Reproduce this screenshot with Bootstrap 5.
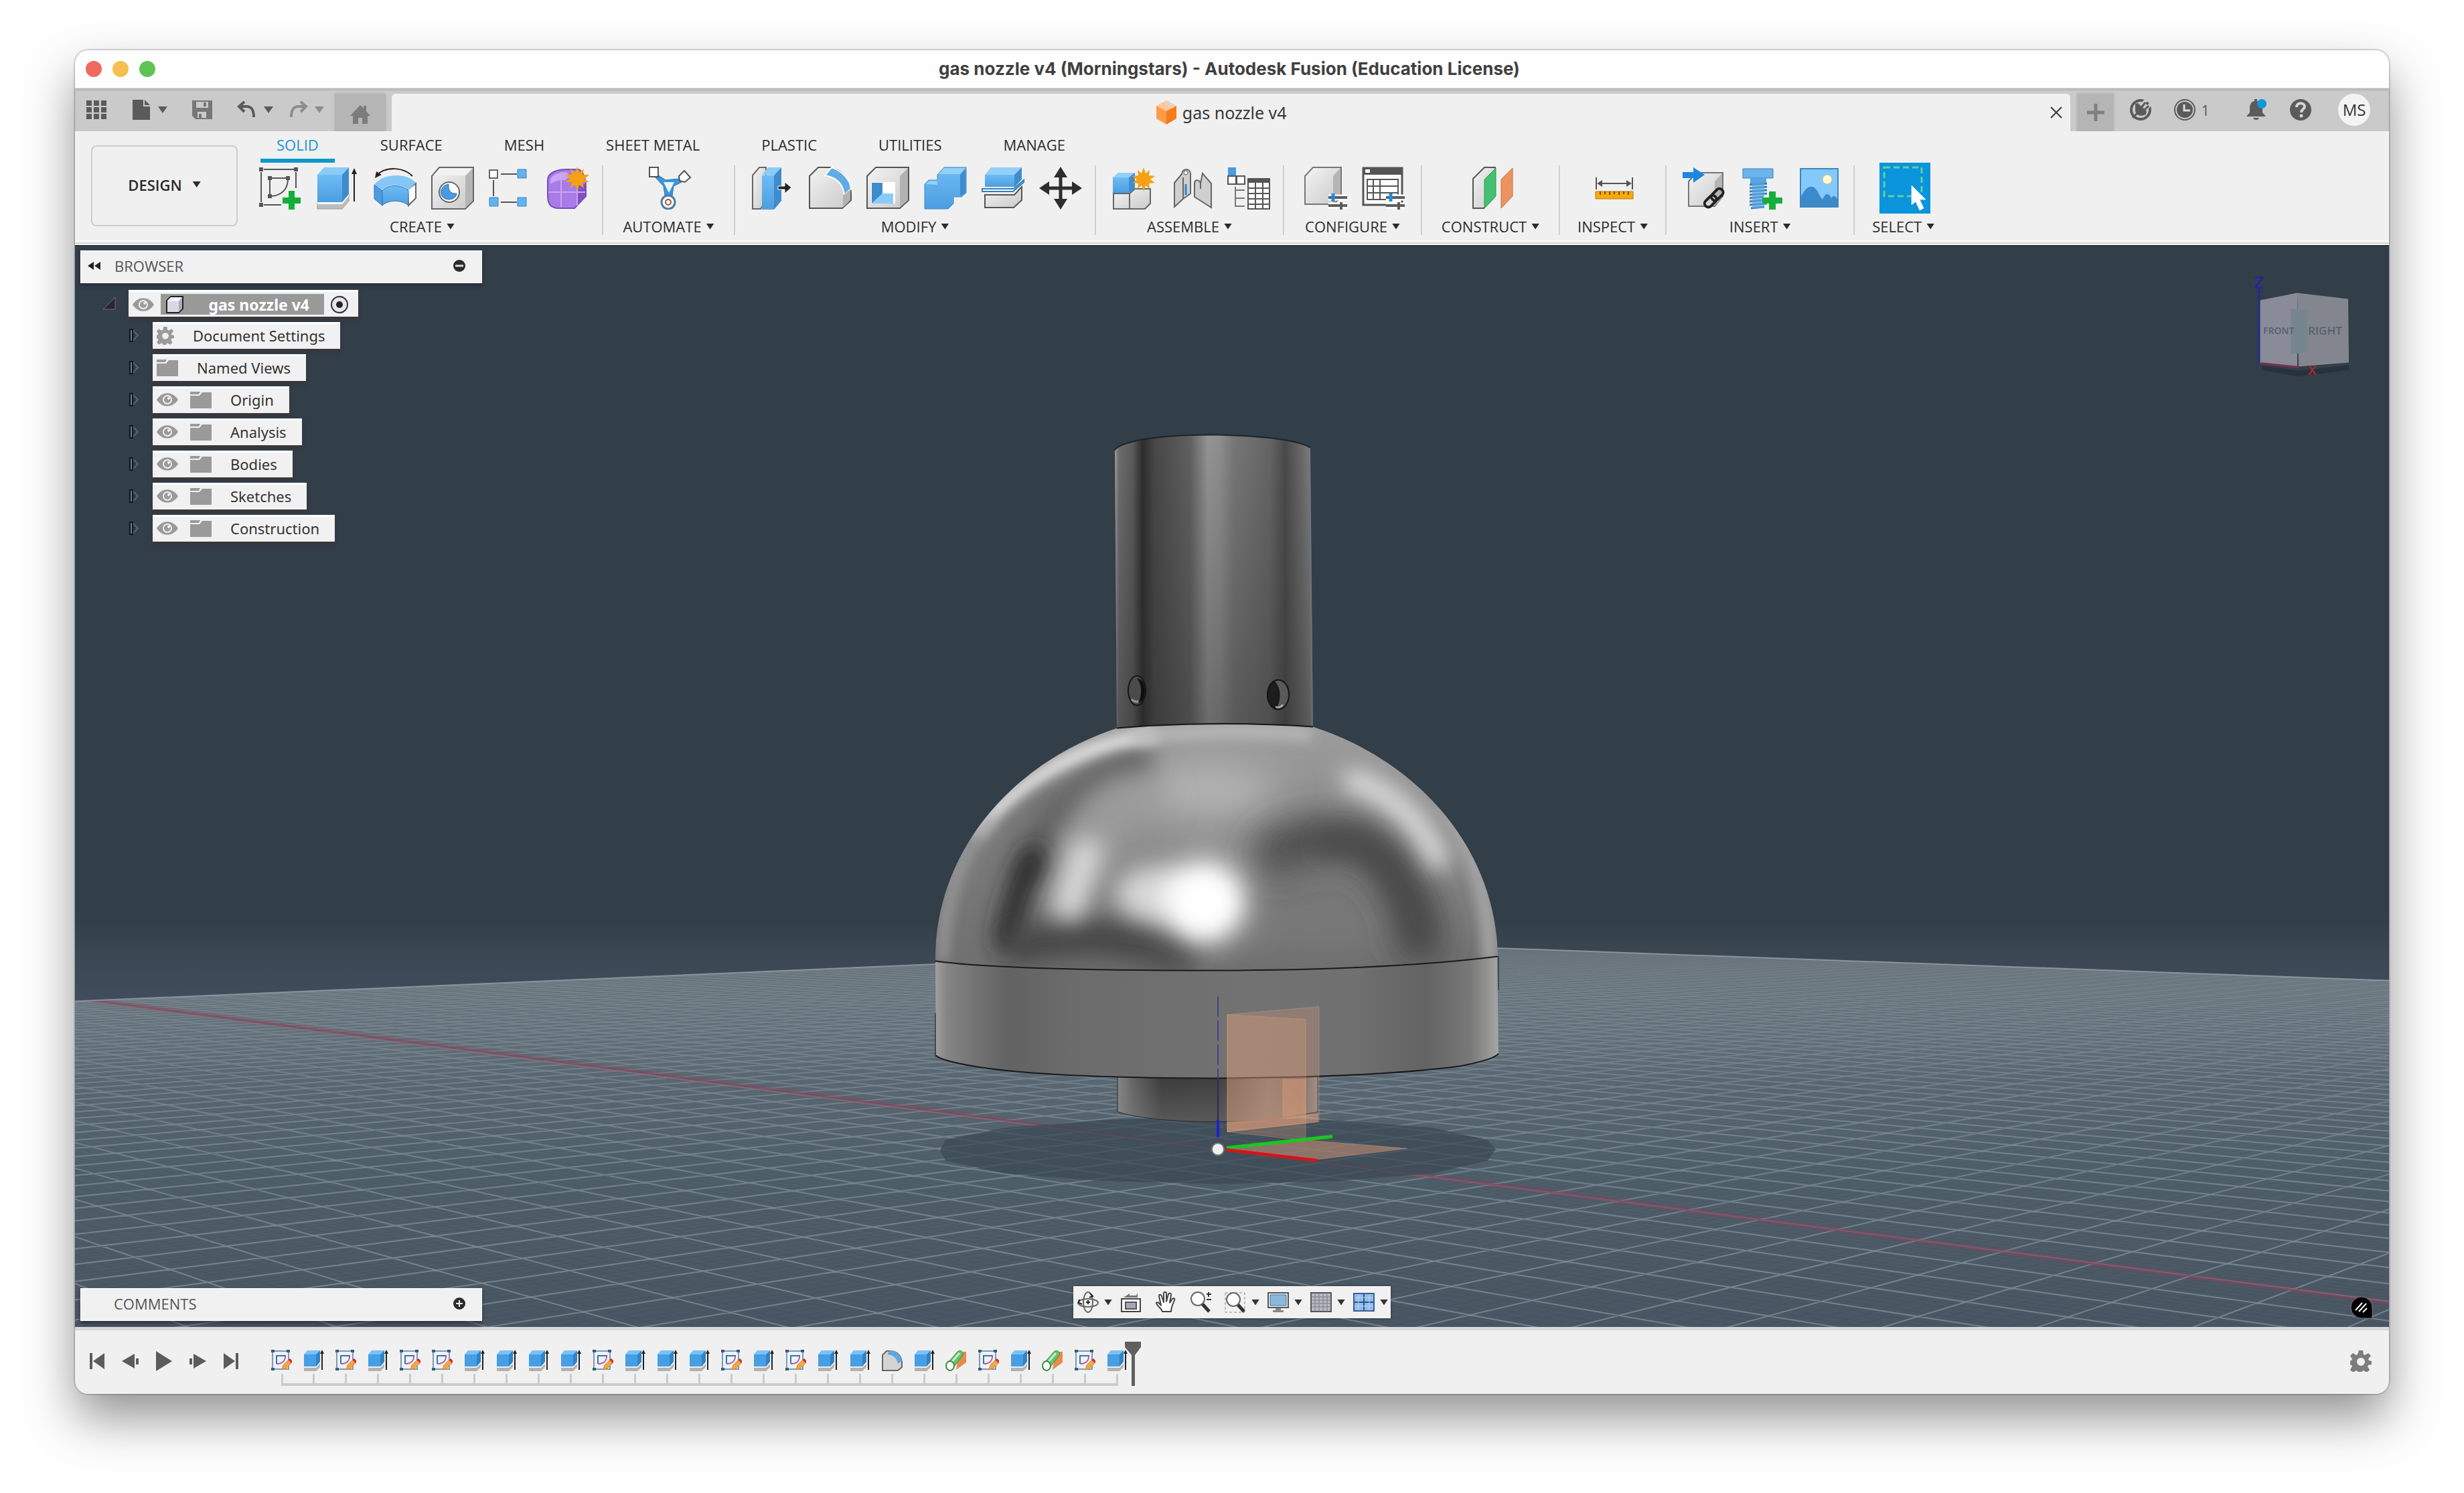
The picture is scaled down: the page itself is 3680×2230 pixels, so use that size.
<!DOCTYPE html>
<html lang="en">
<head>
<meta charset="utf-8">
<meta name="viewport" content="width=device-width, initial-scale=1">
<title>gas nozzle v4 (Morningstars) - Autodesk Fusion (Education License)</title>
<link href="https://cdn.jsdelivr.net/npm/bootstrap@5.3.0/dist/css/bootstrap.min.css" rel="stylesheet">
<style>
  body { background: #fefefe; font-family: "Open Sans", "Noto Sans", sans-serif; font-size: 22px; line-height: 28px; color: #2b2b2b; padding: 75px 112px 148px; }
  svg { display: block; flex: none; }
  button { color: inherit; font: inherit; background: none; border: 0; padding: 0; }
  .app-window { border-radius: 20px; background: #f0f0f0; box-shadow: 0 0 3px rgba(0,0,0,.6), 0 36px 72px rgba(0,0,0,.42); }
  .title-row { height: 57px; background: #fefefe; border-bottom: 1px solid #ddd; padding: 0 16px; font-family: Inter, sans-serif; font-weight: 700; font-size: 26px; color: #404040; }
  .dot { width: 24px; height: 24px; border-radius: 50%; }
  .dot-r { background: #ee6a5f; } .dot-y { background: #f5bf4f; } .dot-g { background: #5fc454; }
  .side-l { width: 120px; } .side-r { width: 128px; }
  .tab-strip { background: #cacaca; padding-top: 8px; color: #5b5b5b; box-shadow: inset 0 3px 3px #b9b9b9; }
  .tools-l { padding: 0 16px 8px; gap: 36px; }
  .g8 { gap: 8px; } .g22 { gap: 22px; }
  .i32 { width: 32px; height: 32px; } .i64 { width: 64px; height: 64px; }
  .tri { width: 14px; height: 10px; background: currentColor; clip-path: polygon(0 0, 100% 0, 50% 100%); flex: none; }
  .tri-s { width: 12px; height: 9px; }
  .faded { color: #8d8d8d; }
  .home-tab { width: 76px; padding-top: 6px; background: #b5b5b5; color: #7c7c7c; box-shadow: 0 0 3px #aaa; }
  .plus-tab { width: 55px; background: #b5b5b5; color: #7f7f7f; margin-left: 10px; box-shadow: 0 0 3px #aaa; }
  .doc-tab { background: #f0f0f0; height: 56px; margin-left: 9px; border-radius: 6px 6px 0 0; color: #383838; font-size: 25px; padding-right: 12px; }
  .doc-name { font-family: "Noto Sans", "Open Sans", sans-serif; }
  .tools-r { padding: 0 28px 8px 24px; }
  .me34 { margin-right: 34px; } .me54 { margin-right: 54px; } .me40 { margin-right: 40px; } .me32 { margin-right: 32px; }
  .avatar { width: 48px; height: 48px; border-radius: 50%; background: #f3f3f3; font-size: 24px; color: #333; }
  .ribbon { background: #f0f0f0; padding-left: 24px; }
  .design-btn { width: 219px; height: 121px; margin: 21px 7px 0 0; padding-bottom: 4px; border: 2px solid #cdcdcd; border-radius: 8px; font-weight: 600; }
  .rtabs { margin-left: 27px; gap: 44px; }
  .rtabs button { padding: 6px 24px 7px; border-bottom: 6px solid transparent; }
  .rtabs button.on { color: #1b93cf; border-color: #0c98c9; }
  .rgroups { margin-top: 4px; padding-bottom: 8px; }
  .rgroup { border-right: 2px solid #cfcfcf; height: 104px; padding-top: 2px; }
  .rgroup:last-child { border: 0; }
  .w-md { min-width: 197px; } .w-lg { min-width: 206px; }
  .ricons { gap: 22px; padding: 0 19px 0 24px; }
  .rlabel { padding: 0 26px; line-height: 26px; gap: 7px; }
  .pick { background: #0a94dc; width: 76px; height: 76px; margin: -6px 0; }
  .rule { height: 7px; background: linear-gradient(#fff 0 2px, #d2d2d2 2px 3px, #fff 3px 4px, #bbb 4px 5px, #fff 5px); }
  .viewport { background: #323e48; border-top: 1px solid #222; }
  .scene { position: absolute; inset: 0; width: 100%; height: 100%; }
  .overlay { position: relative; padding: 7px 8px 9px; }
  .pane { width: 600px; height: 49px; background: #f1f1f1; border: 1px solid #fff; color: #555; padding: 0 24px 4px 49px; box-shadow: 0 4px 5px rgba(40,34,50,.6); }
  .pane-b { padding-left: 10px; }
  .g20 { gap: 20px; }
  .tree { padding-top: 10px; gap: 8px; font-family: "Noto Sans", "Open Sans", sans-serif; }
  .trow { margin-left: 72px; gap: 20px; }
  .trow.root { margin-left: 32px; gap: 18px; }
  .tcell { height: 40px; background: #f1f1f1; border-top: 3px solid #fff; color: #333; padding: 0 23px 3px 6px; box-shadow: 0 5px 5px rgba(60,54,58,.8); }
  .tcell .ico { color: #9a9a9a; }
  .root .tcell { padding: 0 15px 0 6px; gap: 10px; }
  .root-name { background: #999; color: #fff; font-weight: 700; font-size: 23px; height: 31px; width: 244px; padding: 0 22px 0 6px; }
  .gap18 { gap: 18px; } .ps10 { padding-left: 10px; }
  .navbar-3d { background: #f1f1f1; height: 48px; padding: 0 4px 0 6px; gap: 12px; box-shadow: 0 0 3px rgba(0,0,0,.5); color: #333; margin-bottom: 4px; }
  .navbar-3d .solo { margin-right: 8px; }
  .navbar-3d button { gap: 8px; }
  .timeline { background: #f0f0f0; height: 100px; padding: 0 26px 4px 18px; border-top: 5px solid #d6d9dc; color: #5c5c5c; }
  .play { margin-right: 38px; width: 228px; padding-left: 2px; }
  .steps { padding-top: 29px; }
  .steps li { width: 48px; }
  .tickmark { height: 18px; border-bottom: 4px solid #cbcbcb; background: linear-gradient(#cbcbcb, #cbcbcb) center / 3px 100% no-repeat; margin-top: 4px; }
  .steps li:first-child .tickmark { margin-left: 24px; background-position: left; }
  .steps li:nth-last-child(2) .tickmark { margin-right: 22px; background-position: right; }
  .steps li.marker { width: 24px; margin: -12px 0 0 -12px; }
  .corner-badge { right: 24px; bottom: 12px; }
</style>
</head>
<body class="d-flex flex-column min-vh-100 m-0">

<svg width="0" height="0" class="position-absolute" aria-hidden="true">
  <defs>
    <linearGradient id="gGrey" x1="0" y1="0" x2="1" y2="1"><stop offset="0" stop-color="#f4f4f4"/><stop offset="1" stop-color="#c9c9c9"/></linearGradient>
    <linearGradient id="gBlue" x1="0" y1="0" x2="0" y2="1"><stop offset="0" stop-color="#6fbcf4"/><stop offset="1" stop-color="#4b9ee0"/></linearGradient>
    <!-- 32px glyphs -->
    <symbol id="apps" viewBox="0 0 32 32"><g fill="currentColor"><path d="M1 2h8v8H1zM12 2h8v8h-8zM23 2h8v8h-8zM1 12h8v8H1zM12 12h8v8h-8zM23 12h8v8h-8zM1 22h8v8H1zM12 22h8v8h-8zM23 22h8v8h-8z"/></g></symbol>
    <symbol id="file" viewBox="0 0 32 32"><path fill="currentColor" d="M2 1h16v10h10v20H2zM20 1l8 8h-8z"/></symbol>
    <symbol id="save" viewBox="0 0 32 32"><path fill="currentColor" fill-rule="evenodd" d="M1 2h30v28H6l-5-5zM7 4v9h18V4zM9 19v9h13v-9zM18 5h4v6h-4zM11 22h4v6h-4z" opacity=".75"/></symbol>
    <symbol id="undo" viewBox="0 0 32 32"><path fill="none" stroke="currentColor" stroke-width="4" d="M11 4 3 11l8 8M3 11h11c8 0 11 5 11 16"/></symbol>
    <symbol id="redo" viewBox="0 0 32 32"><path fill="none" stroke="currentColor" stroke-width="4" d="M19 4l8 7-8 8M27 11H16C8 11 5 16 5 27"/></symbol>
    <symbol id="home" viewBox="0 0 32 32"><path fill="currentColor" d="M16 2l5 5V3h4v8l6 7h-4v12h-8v-9h-6v9H5V18H1z"/></symbol>
    <symbol id="obox" viewBox="0 0 32 38"><path fill="#ffc79b" d="M16 1l15 8-15 8L1 9z"/><path fill="#ff9b48" d="M1 9l15 8v20L1 28z"/><path fill="#f87a17" d="M31 9l-15 8v20l15-9z"/><path fill="#d9d9d9" d="M16 1l15 8-7 4-10-7z" opacity=".6"/></symbol>
    <symbol id="cross" viewBox="0 0 18 18"><path stroke="currentColor" stroke-width="2" d="M1 1l16 16M17 1L1 17"/></symbol>
    <symbol id="plus" viewBox="0 0 26 26"><path stroke="currentColor" stroke-width="5" d="M13 0v26M0 13h26"/></symbol>
    <symbol id="ext" viewBox="0 0 32 32"><circle cx="16" cy="16" r="14" fill="none" stroke="currentColor" stroke-width="4"/><path stroke="#cacaca" stroke-width="5" d="M16 10L26 0M23 15l9-8"/><path fill="currentColor" d="M8 7l4-1 13 12-1 5-6 2c-6 0-10-3-10-9z"/><path stroke="currentColor" stroke-width="3" d="M17 13l6-8M21 17l7-7M4 28l8-8"/></symbol>
    <symbol id="clock" viewBox="0 0 32 32"><circle cx="16" cy="16" r="15" fill="none" stroke="currentColor" stroke-width="2"/><circle cx="16" cy="16" r="12" fill="currentColor"/><path fill="none" stroke="#ddd" stroke-width="3" d="M15 8v9h9"/></symbol>
    <symbol id="bell" viewBox="0 0 34 34"><path fill="currentColor" d="M13 1h4v3c6 1 8 5 8 11v6l5 6H1l5-6v-6C6 9 8 5 13 4zM11 29h9c-1 4-8 4-9 0z"/><circle cx="24" cy="8" r="7" fill="#0d97dc"/></symbol>
    <symbol id="help" viewBox="0 0 32 32"><circle cx="16" cy="16" r="16" fill="currentColor"/><path fill="none" stroke="#d6d6d6" stroke-width="4" d="M10 12c0-8 12-7 12-1 0 4-5 4-5 9"/><circle cx="17" cy="25" r="2.500" fill="#d6d6d6"/></symbol>
    <symbol id="rew" viewBox="0 0 20 12"><path fill="#222" d="M9 0v12L0 6zM19 0v12l-9-6z"/></symbol>
    <symbol id="minusc" viewBox="0 0 18 18"><circle cx="9" cy="9" r="9" fill="#2b2b2b"/><path stroke="#ddd" stroke-width="3" d="M3 9h12"/></symbol>
    <symbol id="plusc" viewBox="0 0 18 18"><circle cx="9" cy="9" r="9" fill="#2b2b2b"/><path stroke="#eee" stroke-width="2" d="M4 9h10M9 4v10"/></symbol>
    <symbol id="eye" viewBox="0 0 32 32"><path fill="currentColor" d="M0 16C8 3 24 3 32 16 24 29 8 29 0 16z"/><circle cx="16" cy="16" r="7" fill="#f1f1f1"/><circle cx="16" cy="16" r="5" fill="currentColor"/><circle cx="18" cy="14" r="2" fill="#f1f1f1"/></symbol>
    <symbol id="folder" viewBox="0 0 32 32"><path fill="currentColor" d="M0 4h15l-2 4H0zM0 10h14l4-5h14v24H0z"/></symbol>
    <symbol id="gear" viewBox="0 0 32 32"><path fill="currentColor" fill-rule="evenodd" d="M13 0h6l1 6 2 1 5-3 4 4-4 5 1 2 4 1v5l-5 1-1 2 3 5-4 4-5-3-2 1-1 5h-5l-1-5-2-1-5 3-4-4 3-5-1-2-5-1v-5l5-1 1-2-3-5 4-4 5 3 2-1zM16 11a6 6 0 100 12 6 6 0 000-12z"/></symbol>
    <symbol id="solid" viewBox="0 0 28 28"><path fill="#d9d9e3" stroke="#222" stroke-width="2" d="M2 8l6-6h18v18l-6 6H2z"/><path fill="#f4f4fb" d="M3 8l5-5h17l-5 6H3z"/><path fill="#a9a9b8" d="M20 9l5-6v17l-5 5z"/></symbol>
    <symbol id="ropen" viewBox="0 0 22 20"><path fill="#2a2633" stroke="#75688c" stroke-width="1" d="M20 1v18H2z"/></symbol>
    <symbol id="rshut" viewBox="0 0 16 20"><path fill="none" stroke="#566773" stroke-width="2" d="M5 1l9 9-9 9z"/><path fill="#6d7e8a" stroke="#11181c" stroke-width="2" d="M2 1v18h4V1z"/></symbol>
    <symbol id="radio" viewBox="0 0 26 26"><circle cx="13" cy="13" r="12" fill="#e4e4ec" stroke="#333" stroke-width="2"/><circle cx="13" cy="13" r="5" fill="#222"/></symbol>
    <!-- navigation glyphs -->
    <symbol id="orbit" viewBox="0 0 32 32"><g fill="none" stroke="#666" stroke-width="2"><ellipse cx="16" cy="17" rx="15" ry="6"/><ellipse cx="16" cy="16" rx="7" ry="15"/></g><path stroke="#222" stroke-width="2" fill="none" d="M16 13v6M13 16h6M19 3l4 4-5 2M3 12l-1 5 5 2"/></symbol>
    <symbol id="lookat" viewBox="0 0 32 32"><path fill="#fff" stroke="#444" stroke-width="2" d="M2 11h28v19H2z"/><path fill="#a6a8b8" stroke="#555" stroke-width="2" d="M8 16h16v10H8z"/><path fill="#777" d="M5 9l9-6v3h10l2-4v7z"/></symbol>
    <symbol id="hand" viewBox="0 0 32 32"><path fill="#fff" stroke="#444" stroke-width="2" stroke-linejoin="round" d="M11 30c-2-6-9-9-9-13 2-2 5 1 7 4L6 7c0-3 3-3 4 0l3 9V3c0-3 4-3 4 0v12l3-11c1-2 4-2 4 1l-2 12 4-6c2-2 4 0 3 2-2 6-5 9-5 17z"/></symbol>
    <symbol id="zoomg" viewBox="0 0 32 32"><circle cx="12" cy="11" r="10" fill="#fff" stroke="#666" stroke-width="2"/><path stroke="#333" stroke-width="5" d="M19 19l10 11"/><path stroke="#333" stroke-width="2" d="M28 1v7M25 4h7M25 12h7"/></symbol>
    <symbol id="zoomw" viewBox="0 0 32 32"><path fill="none" stroke="#888" stroke-width="1" stroke-dasharray="4 3" d="M1 2h29v29H1z"/><circle cx="13" cy="12" r="10" fill="#fff" stroke="#666" stroke-width="2"/><path stroke="#333" stroke-width="5" d="M20 20l9 10"/></symbol>
    <symbol id="screen" viewBox="0 0 32 32"><path fill="#eee" stroke="#555" stroke-width="2" d="M1 2h30v22H1z"/><path fill="#8ab9dd" stroke="#3e6f98" d="M4 5h24v16H4z"/><path fill="#888" d="M12 25h8v3h4v3H8v-3h4z"/></symbol>
    <symbol id="mesh" viewBox="0 0 32 32"><path fill="#b9b9c2" stroke="#555" stroke-width="2" d="M1 2h30v28H1z"/><path stroke="#7b7b86" d="M1 8h30M1 13h30M1 18h30M1 23h30M7 2v28M13 2v28M19 2v28M25 2v28"/></symbol>
    <symbol id="quad" viewBox="0 0 32 32"><path fill="#8fbbe9" stroke="#3c5f93" stroke-width="2" d="M1 3h30v26H1z"/><path stroke="#2f5590" stroke-width="2" d="M16 3v26M1 16h30"/><path stroke="#c0d9f3" d="M8 4v24M24 4v24M2 9h28M2 22h28"/></symbol>
    <!-- playback -->
    <symbol id="pfirst" viewBox="0 0 26 28"><path fill="currentColor" d="M2 2h4v24H2zM24 2v24L7 14z"/></symbol>
    <symbol id="pprev" viewBox="0 0 26 28"><path fill="currentColor" d="M19 3v22L0 14zM21 10h4v9h-4z"/></symbol>
    <symbol id="pplay" viewBox="0 0 26 32"><path fill="currentColor" d="M1 1l24 15L1 31z"/></symbol>
    <symbol id="pnext" viewBox="0 0 26 28"><path fill="currentColor" d="M7 3v22l19-11zM1 10h4v9H1z"/></symbol>
    <symbol id="plast" viewBox="0 0 26 28"><path fill="currentColor" d="M24 2h-4v24h4zM2 2v24l17-12z"/></symbol>
    <symbol id="pin" viewBox="0 0 24 66"><path fill="#5f5f5f" d="M0 0h24v8l-9 12v46h-5V20L0 8z"/></symbol>
    <!-- timeline features -->
    <symbol id="tS" viewBox="0 0 32 32"><path fill="#e9f4fd" stroke="#7f9ab4" stroke-width="2" d="M3 2h24v27H3z"/><path fill="#3c5b7a" d="M1 0h5v4H1zM24 0h5v4h-5zM1 27h5v4H1z"/><path fill="none" stroke="#4a6f93" stroke-width="2" d="M9 21V9h14"/><path fill="none" stroke="#c2569d" stroke-width="2" d="M22 10c0 7-5 11-13 11"/><path fill="#f3a83d" stroke="#d9822b" d="M17 30l2-7 8-8 5 4-9 9z"/><path fill="#cf3040" d="M26 15l3-2 4 4-2 3z"/></symbol>
    <symbol id="tE" viewBox="0 0 32 32"><path fill="#b2b2b2" d="M2 25h18l6-5v6l-6 6H2z"/><path fill="#eee" d="M2 24h18l6-6v3l-6 6H2z"/><path fill="#469fe4" d="M2 7h18v18H2z"/><path fill="#7cc1f5" d="M2 7l5-6h19l-6 6z"/><path fill="#2f83c8" d="M20 7l6-6v17l-6 7z"/><path stroke="#222" stroke-width="2" d="M29 30V4"/><path fill="#222" d="M26 6l3-6 3 6z"/></symbol>
    <symbol id="tF" viewBox="0 0 32 32"><path fill="#d4d4d4" stroke="#666" stroke-width="2" d="M2 31V8l6-6h6c11 1 16 8 17 17v7l-6 5z"/><path fill="#5da9df" d="M13 1c11 1 17 8 18 16l-6 4C24 14 19 8 9 7z"/></symbol>
    <symbol id="tP" viewBox="0 0 32 32"><path fill="#e98a4a" d="M20 3h11v16L16 30z"/><path fill="#67c26f" stroke="#3a8a42" d="M3 20L19 2c4-2 9 2 7 6L11 28z"/><path stroke="#c8efcb" stroke-width="3" d="M8 20L21 5"/><ellipse cx="7" cy="24" rx="6" ry="7" fill="#fff" stroke="#3a8a42" stroke-width="2"/></symbol>
    <!-- ribbon, 64px -->
    <symbol id="rSketch" viewBox="0 0 64 64"><g fill="none" stroke="#555" stroke-width="2"><path d="M8 4h45M4 8v45M56 8v24M8 57h26M20 17h22M17 20v22M44 20c-1 14-8 22-24 24"/></g><path fill="#555" d="M1 1h6v6H1zM53 1h6v6h-6zM1 54h6v6H1zM14 14h6v6h-6zM41 14h6v6h-6zM14 41h6v6h-6z"/><path fill="#12ae38" d="M45 36h9v10h9v9h-9v9h-9v-9h-9v-9h9z"/></symbol>
    <symbol id="rExt" viewBox="0 0 64 64"><path fill="#bdbdbd" stroke="#999" d="M2 53h37l10-12v10L39 63H2z"/><path fill="#fff" d="M2 52h37l10-12v4L39 56H2z"/><path fill="url(#gBlue)" d="M2 12h37v41H2z"/><path fill="#8accf8" d="M2 12L12 1h37L39 12z"/><path fill="#3f8ccd" d="M39 12L49 1v40L39 53z"/><path stroke="#222" stroke-width="2" d="M57 52V8"/><path fill="#222" d="M53 11l4-9 4 9z"/></symbol>
    <symbol id="rRev" viewBox="0 0 64 64"><path fill="#fff" stroke="#666" stroke-width="2" d="M51 34l12-9v22L52 58z"/><path fill="#84c7f7" d="M1 27C14 9 50 9 63 24L52 35C42 25 22 25 13 35z"/><path fill="#4a9be0" stroke="#3378b8" d="M1 27l12 9v22L1 48z"/><path fill="url(#gBlue)" stroke="#3378b8" d="M13 36c9-10 29-10 39 0v22c-10-9-30-9-39 0z"/><path fill="none" stroke="#331f1f" stroke-width="2" d="M6 11c14-11 38-11 52 3"/><path fill="#331f1f" d="M2 17l2-10 8 5z"/></symbol>
    <symbol id="rHole" viewBox="0 0 64 64"><path fill="url(#gGrey)" stroke="#666" stroke-width="2" d="M1 14L12 1h51v50L51 63H1z"/><path fill="#f2f2f2" d="M3 13L13 3h47l-9 10z"/><path fill="#b5b5b5" d="M51 14l11-11v47L51 62z"/><circle cx="27" cy="38" r="15" fill="#fff" stroke="#666" stroke-width="2"/><path fill="#4a9be0" stroke="#2d74b3" d="M26 26c-16 3-15 22 0 23 7 0 12-4 12-9-9 1-13-5-12-14z"/></symbol>
    <symbol id="rPat" viewBox="0 0 64 64"><path stroke="#555" stroke-width="2" d="M18 11h24M7 20v24M18 53h24"/><path fill="#fff" stroke="#666" stroke-width="2" d="M1 5h12v12H1z"/><path fill="#62b2ee" stroke="#3f86bf" d="M43 4h13v13H43zM1 46h13v13H1zM43 46h13v13H43z"/></symbol>
    <symbol id="rForm" viewBox="0 0 64 64"><path fill="#a97be6" stroke="#7a4dc0" stroke-width="2" d="M2 20C2 10 14 4 30 4h18c8 4 11 12 11 26v14L42 62H18C6 62 2 55 2 44z"/><path fill="#c9a5f5" d="M6 20C8 12 18 8 30 8l6 6-8 6c-10 0-16 2-22 6z"/><path fill="#7f52c4" d="M48 26h10v18L46 56z"/><path fill="none" stroke="#c9a5f5" stroke-width="2" d="M22 8v53M3 38h55M46 24v34"/><path fill="#f5a114" d="M46 0l3 9 7-6-2 9 10 0-7 6 7 5-10 0 2 9-7-5-3 9-3-9-7 5 2-9-10 0 7-5-7-6 10 0-2-9 7 6z"/></symbol>
    <symbol id="rAuto" viewBox="0 0 64 64"><path fill="#3c97dc" stroke="#2a6ea8" d="M10 10l15 10 20-2 4 5-12 6-3 20h-9l-3-20L6 12z"/><path fill="#e8f4fd" d="M22 23h16l-8 16z"/><path fill="#fff" stroke="#555" stroke-width="2" d="M1 1h13v14H1zM45 14l8-8 9 10-8 7-8-2z"/><circle cx="29" cy="53" r="10" fill="#fff" stroke="#4a7da8" stroke-width="3"/><circle cx="29" cy="53" r="4" fill="#fff" stroke="#a0503c" stroke-width="2"/></symbol>
    <symbol id="rPress" viewBox="0 0 64 64"><path fill="url(#gGrey)" stroke="#666" stroke-width="2" d="M2 13L12 1h10v50L14 63H2z"/><path fill="url(#gBlue)" d="M16 13h18v51H16z"/><path fill="#8accf8" d="M16 12L25 1h20L34 13z"/><path fill="#3f8ccd" d="M34 13L45 1v50L34 64z"/><path fill="#222" stroke="#fff" d="M40 29h10v-6l10 8-10 9v-6H40z"/></symbol>
    <symbol id="rFillet" viewBox="0 0 64 64"><path fill="url(#gGrey)" stroke="#555" stroke-width="2" d="M1 62V14L14 1h18c20 4 30 20 31 39v10L50 62z"/><path fill="#62ace3" stroke="#fff" stroke-width="2" d="M34 1c18 6 28 20 29 32l-10 9C51 26 42 16 24 13z"/><path fill="#b2b2b2" d="M51 43l11-9v16L51 61z"/></symbol>
    <symbol id="rShell" viewBox="0 0 64 64"><path fill="url(#gGrey)" stroke="#555" stroke-width="2" d="M1 14L14 1h49v49L50 62H1z"/><path fill="#b2b2b2" d="M50 14L62 2v48L50 61z"/><path fill="#fff" d="M7 23h36v32H7z"/><path fill="#3e8cc9" d="M8 24h16v16L8 55z"/><path fill="#8accf8" d="M8 55l16-15h16v15z"/></symbol>
    <symbol id="rComb" viewBox="0 0 64 64"><path fill="url(#gBlue)" stroke="#4288bf" d="M1 26l6-6h13V12L30 1h33v38l-7 6H44v10l-8 8H1z"/><path fill="#93d0f9" d="M22 11l8-9h32l-8 9zM2 26l6-5h12v6z"/><path fill="#3f8ccd" d="M54 12l8-9v36l-8 5z"/></symbol>
    <symbol id="rSplit" viewBox="0 0 64 64"><path fill="url(#gGrey)" stroke="#555" stroke-width="2" d="M5 42h44l11-12v20L48 61H5z"/><path fill="url(#gBlue)" d="M5 12h44v18H5z"/><path fill="#93d0f9" d="M5 12L14 1h46L49 12z"/><path fill="#3f8ccd" d="M49 12L60 1v18L49 31z"/><path fill="#fff" stroke="#2f7fc2" stroke-width="2" d="M1 37h46l16-14v-3L48 33H1z"/></symbol>
    <symbol id="rMove" viewBox="0 0 64 64"><path stroke="#2e2e2e" stroke-width="5" d="M32 8v48M8 32h48"/><path fill="#2e2e2e" d="M32 0l10 16H22zM32 64l10-16H22zM0 32l15-10v20zM64 32L49 22v20z"/></symbol>
    <symbol id="rNewC" viewBox="0 0 64 64"><path fill="url(#gGrey)" stroke="#666" stroke-width="2" d="M2 40h24v23H2zM26 40l8-7h23v22l-8 8H26z"/><path fill="url(#gBlue)" d="M1 16h24v23H1z"/><path fill="#93d0f9" d="M1 16l8-7h25l-9 7z"/><path fill="#3f8ccd" d="M25 16l9-7v24l-9 6z"/><path fill="#f5a114" d="M47 1l3 9 6-5-1 8 9 1-7 5 7 5-9 1 1 8-6-5-3 9-3-9-6 5 1-8-9-1 7-5-7-5 9-1-1-8 6 5z"/></symbol>
    <symbol id="rJoint" viewBox="0 0 64 64"><path fill="#cfcfcf" stroke="#666" stroke-width="2" d="M7 24l11-13c1-9 12-9 13-1v30L20 48 7 60zM37 24c1-5 8-5 9 1l3-15 13 15v36L37 45z"/><circle cx="24" cy="9" r="3" fill="#fff" stroke="#555"/><path stroke="#2f86cd" stroke-width="3" d="M24 26v16"/><path stroke="#666" stroke-width="2" d="M20 16v32M46 25v8"/></symbol>
    <symbol id="rBom" viewBox="0 0 64 64"><path fill="#4a9be0" d="M1 1h12v12H1z"/><path fill="#fff" stroke="#555" stroke-width="2" d="M1 14h12v12H1zM14 14h12v12H14z"/><path stroke="#777" stroke-width="2" d="M12 30v30M12 35h14M12 47h14M12 59h14"/><path fill="#fff" stroke="#555" stroke-width="2" d="M31 18h32v45H31z"/><path fill="#555" d="M30 17h34v7H30z"/><path stroke="#555" stroke-width="2" d="M31 32h32M31 40h32M31 48h32M31 56h32M42 24v39M53 24v39"/></symbol>
    <symbol id="sliders" viewBox="0 0 28 30"><path stroke="#fff" stroke-width="9" d="M0 10h28M0 22h28"/><path stroke="#5c5c5c" stroke-width="4" d="M0 10h28M0 22h28"/><path stroke="#1b8be8" stroke-width="5" d="M7 4v12"/><path stroke="#5c5c5c" stroke-width="4" d="M19 17v11"/></symbol>
    <symbol id="rConf" viewBox="0 0 64 64"><path fill="url(#gGrey)" stroke="#777" stroke-width="2" d="M1 14L13 1h42v44L44 56H1z"/><path fill="#b5b5b5" d="M43 14L54 2v42L43 55z"/><use href="#sliders" x="36" y="36" width="28" height="30"/></symbol>
    <symbol id="rTab" viewBox="0 0 64 64"><path fill="#fff" stroke="#555" stroke-width="3" d="M2 2h58v55H2z"/><path fill="#555" d="M1 1h60v11H1z"/><path fill="#fff" d="M5 4h7v5H5z"/><path fill="none" stroke="#555" stroke-width="2" d="M8 19h46v30H8zM8 29h46M8 39h46M17 19v30M27 19v30"/><use href="#sliders" x="36" y="36" width="28" height="30"/></symbol>
    <symbol id="rPlane" viewBox="0 0 64 64"><path fill="url(#gGrey)" stroke="#555" stroke-width="2" d="M3 18L20 1h16v43L19 62H3z"/><path fill="#45c070" stroke="#2c9a52" d="M20 19L37 2v42L20 62z"/><path fill="#ec9460" stroke="#c9713c" d="M45 19L62 2v42L45 62z"/></symbol>
    <symbol id="rMeas" viewBox="0 0 64 64"><path stroke="#555" stroke-width="2" d="M5 16v18M59 16v18M8 25h48"/><path fill="#555" d="M6 25l8-5v10zM58 25l-8-5v10z"/><path fill="#f8a90c" stroke="#b97a06" stroke-width="1" d="M4 37h56v11H4z"/><path stroke="#6b4a0a" stroke-width="2" d="M11 37v5M18 37v4M25 37v5M32 37v4M39 37v5M46 37v4M53 37v5"/></symbol>
    <symbol id="rLink" viewBox="0 0 64 64"><path fill="url(#gGrey)" stroke="#777" stroke-width="2" d="M9 22L20 9h40v35L48 59H9z"/><path fill="#b5b5b5" d="M48 22l11-12v36L48 58z"/><path fill="#1d86df" d="M0 8h16V1l17 11-17 12v-7H0z"/><g fill="none" stroke="#222" stroke-width="4"><rect x="32" y="46" width="20" height="11" rx="5" transform="rotate(-45 42 52)"/><rect x="42" y="36" width="20" height="11" rx="5" transform="rotate(-45 52 42)"/></g></symbol>
    <symbol id="rBolt" viewBox="0 0 64 64"><path fill="#6bb4ee" stroke="#3a80bb" d="M4 3h45v14H4z"/><path fill="#5aa5e2" d="M15 17h24v10H15z"/><path stroke="#3a80bb" stroke-width="3" d="M14 27l26-2M14 32l26-2M14 37l26-2M14 42l26-2M14 47l20-2M14 52l20-2M14 57l26-2M16 62l20-2"/><path fill="#5aa5e2" d="M18 22h18v40H18z" opacity=".7"/><path fill="#14b03a" d="M43 37h10v9h10v9H53v9H43v-9H33v-9h10z"/></symbol>
    <symbol id="rImg" viewBox="0 0 64 64"><path fill="#84c9fb" stroke="#3f86bf" stroke-width="2" d="M4 3h56v57H4z"/><path fill="#3b8bca" d="M5 45c8-18 20-22 28-1l4 5c4-10 9-11 13-2 3-5 6-4 9 1v11H5z"/><circle cx="44" cy="19" r="7" fill="#fffbd8" stroke="#ddb96a"/></symbol>
    <symbol id="rSel" viewBox="0 0 76 76"><path fill="none" stroke="#5fd0a0" stroke-width="3" stroke-dasharray="9 5" d="M7 7h56v43H7z"/><path fill="#fff" stroke="#cfe9f8" d="M48 34v29l6-5 6 13 6-3-6-13h9z"/></symbol>
  </defs>
</svg>

<main class="app-window d-flex flex-column flex-fill overflow-hidden">

  <header class="title-row d-flex align-items-center justify-content-between">
    <div class="side-l d-flex gap-3">
      <button class="dot dot-r" aria-label="Close window"></button><button class="dot dot-y" aria-label="Minimise"></button><button class="dot dot-g" aria-label="Zoom window"></button>
    </div>
    <div>gas nozzle v4 (Morningstars) - Autodesk Fusion (Education License)</div>
    <div class="side-r"></div>
  </header>

  <nav class="tab-strip d-flex">
    <div class="tools-l d-flex align-items-center">
      <button aria-label="Data panel"><svg class="i32"><use href="#apps"/></svg></button>
      <button class="d-flex align-items-center g8" aria-label="File"><svg class="i32"><use href="#file"/></svg><span class="tri"></span></button>
      <button aria-label="Save"><svg class="i32"><use href="#save"/></svg></button>
      <div class="d-flex align-items-center g22">
        <button class="d-flex align-items-center g8" aria-label="Undo"><svg class="i32"><use href="#undo"/></svg><span class="tri"></span></button>
        <button class="d-flex align-items-center g8 faded" aria-label="Redo"><svg class="i32"><use href="#redo"/></svg><span class="tri"></span></button>
      </div>
    </div>
    <button class="home-tab d-flex align-items-center justify-content-center" aria-label="Home"><svg class="i32"><use href="#home"/></svg></button>
    <div class="doc-tab d-flex align-items-center flex-fill">
      <div class="d-flex align-items-center justify-content-center flex-fill g8"><svg width="32" height="38"><use href="#obox"/></svg><span class="doc-name">gas nozzle v4</span></div>
      <button aria-label="Close tab"><svg width="18" height="18"><use href="#cross"/></svg></button>
    </div>
    <button class="plus-tab d-flex align-items-center justify-content-center" aria-label="New tab"><svg width="26" height="26"><use href="#plus"/></svg></button>
    <div class="tools-r d-flex align-items-center">
      <button class="me34" aria-label="Extensions"><svg class="i32"><use href="#ext"/></svg></button>
      <button class="d-flex align-items-center g8 me54" aria-label="Job status"><svg class="i32"><use href="#clock"/></svg><span>1</span></button>
      <button class="me32" aria-label="Notifications"><svg width="34" height="34"><use href="#bell"/></svg></button>
      <button class="me40" aria-label="Help"><svg class="i32"><use href="#help"/></svg></button>
      <button class="avatar">MS</button>
    </div>
  </nav>

  <section class="ribbon d-flex">
    <button class="design-btn d-flex align-items-center justify-content-center gap-3"><span>DESIGN</span><span class="tri tri-s"></span></button>
    <div>
      <div class="rtabs d-flex">
        <button class="on">SOLID</button><button>SURFACE</button><button>MESH</button><button>SHEET METAL</button><button>PLASTIC</button><button>UTILITIES</button><button>MANAGE</button>
      </div>
      <div class="rgroups d-flex" id="groups"></div>
    </div>
  </section>
  <div class="rule"></div>

  <section class="viewport position-relative d-flex flex-column flex-fill">
    <svg class="scene" viewBox="112 366 3456 1616" preserveAspectRatio="xMidYMid slice" aria-label="3D view of the gas nozzle">
      <defs>
        <linearGradient id="sky" gradientUnits="userSpaceOnUse" x1="0" y1="1370" x2="0" y2="1495"><stop offset="0" stop-color="#323e48"/><stop offset=".4" stop-color="#3a4650"/><stop offset="1" stop-color="#414d5e"/></linearGradient>
        <linearGradient id="floor" gradientUnits="userSpaceOnUse" x1="0" y1="1410" x2="0" y2="1982"><stop offset="0" stop-color="#8f939b"/><stop offset=".12" stop-color="#7f8a92"/><stop offset=".35" stop-color="#5f6e78"/><stop offset=".6" stop-color="#50606b"/><stop offset="1" stop-color="#495663"/></linearGradient>
        <linearGradient id="lineFade" gradientUnits="userSpaceOnUse" x1="0" y1="1480" x2="0" y2="1900"><stop offset="0" stop-color="#a3b2ba" stop-opacity=".12"/><stop offset=".5" stop-color="#a3b2ba" stop-opacity=".36"/><stop offset="1" stop-color="#9aa9b1" stop-opacity=".52"/></linearGradient>
        <linearGradient id="tube"><stop offset="0" stop-color="#a2a09e"/><stop offset=".02" stop-color="#6e6e6e"/><stop offset=".09" stop-color="#5a5a5a"/><stop offset=".14" stop-color="#2c2c2c"/><stop offset=".2" stop-color="#474747"/><stop offset=".38" stop-color="#606060"/><stop offset=".47" stop-color="#949494"/><stop offset=".53" stop-color="#8e8e8e"/><stop offset=".6" stop-color="#777"/><stop offset=".78" stop-color="#656565"/><stop offset=".86" stop-color="#4a4a4a"/><stop offset=".95" stop-color="#6c6c6c"/><stop offset=".985" stop-color="#7b7b7b"/><stop offset="1" stop-color="#8fa0a8"/></linearGradient>
        <linearGradient id="tubeDark" x1="0" y1="0" x2="0" y2="1"><stop offset="0" stop-color="#2a2a2a" stop-opacity="0"/><stop offset="1" stop-color="#2a2a2a" stop-opacity=".4"/></linearGradient>
        <linearGradient id="band"><stop offset="0" stop-color="#a2a09e"/><stop offset=".02" stop-color="#858585"/><stop offset=".07" stop-color="#737373"/><stop offset=".13" stop-color="#626262"/><stop offset=".25" stop-color="#6c6c6c"/><stop offset=".55" stop-color="#727272"/><stop offset=".75" stop-color="#707070"/><stop offset=".87" stop-color="#636363"/><stop offset=".95" stop-color="#787878"/><stop offset="1" stop-color="#a5a5a3"/></linearGradient>
        <linearGradient id="stem"><stop offset="0" stop-color="#858585"/><stop offset=".08" stop-color="#626262"/><stop offset=".22" stop-color="#383838"/><stop offset=".5" stop-color="#3b3b3b"/><stop offset=".75" stop-color="#6a6a6a"/><stop offset=".92" stop-color="#5c5c5c"/><stop offset="1" stop-color="#8b8b8b"/></linearGradient>
        <linearGradient id="stemLight" x1="0" y1="0" x2="0" y2="1"><stop offset="0" stop-color="#888" stop-opacity="0"/><stop offset="1" stop-color="#888" stop-opacity=".4"/></linearGradient>
        <linearGradient id="domeBase" x1="0" y1="0" x2="0" y2="1"><stop offset="0" stop-color="#9c9c9c"/><stop offset=".5" stop-color="#8c8c8c"/><stop offset="1" stop-color="#6e6e6e"/></linearGradient>
        <filter id="b8" filterUnits="userSpaceOnUse" x="1300" y="1000" width="1040" height="520"><feGaussianBlur stdDeviation="9"/></filter>
        <filter id="b14" filterUnits="userSpaceOnUse" x="1300" y="1000" width="1040" height="520"><feGaussianBlur stdDeviation="17"/></filter>
        <filter id="b24" filterUnits="userSpaceOnUse" x="1300" y="1000" width="1040" height="520"><feGaussianBlur stdDeviation="28"/></filter>
        <clipPath id="floorClip"><path d="M112 1495L2085 1410L3568 1464V1982H112z"/></clipPath>
        <clipPath id="domeClip"><path id="domeShape" d="M1397 1435V1430A421 367 0 0 1 1668 1087Q1818 1075 1961 1085A419 370 0 0 1 2237 1428Q2080 1450 1818 1450Q1500 1449 1397 1435z"/></clipPath>
      </defs>
      <rect x="112" y="366" width="3456" height="1616" fill="#323e48"/>
      <rect x="112" y="1370" width="3456" height="300" fill="url(#sky)"/>
      <g clip-path="url(#floorClip)">
        <rect x="112" y="1400" width="3456" height="582" fill="url(#floor)"/>
        <path id="minor" fill="none" stroke="#2c3a45" stroke-opacity=".13" stroke-width="1"/>
        <path id="major" fill="none" stroke="url(#lineFade)" stroke-width="2"/>
        <path d="M112 1490L3568 1945" stroke="#8c4058" stroke-opacity=".2" stroke-width="10"/>
        <path d="M112 1490L3568 1945" stroke="#8c4058" stroke-opacity=".55" stroke-width="3"/>
      </g>
      <path d="M112 1495L2085 1410L3568 1464" fill="none" stroke="#a0a8b0" stroke-opacity=".7" stroke-width="2"/>
      <path d="M1404 1718L1412 1702L1500 1684L1650 1672L1820 1667L2000 1673L2140 1684L2222 1702L2234 1716L2222 1733L2140 1752L1990 1764L1819 1768L1640 1763L1500 1752L1412 1733z" fill="#3a4854" fill-opacity=".72"/>

      <path d="M1669 1590H1968V1660Q1900 1675 1806 1675Q1710 1674 1669 1660z" fill="url(#stem)"/>
      <path d="M1669 1600H1968V1660Q1900 1675 1806 1675Q1710 1674 1669 1660z" fill="url(#stemLight)" stroke="#2a2a2a" stroke-width="1"/>

      <path d="M1665 672Q1668 664 1705 656Q1760 648 1820 649Q1930 652 1957 668L1961 1100H1668z" fill="url(#tube)"/>
      <path d="M1665 672Q1668 664 1705 656Q1760 648 1820 649Q1930 652 1957 668L1961 1100H1668z" fill="url(#tubeDark)"/>
      <path d="M1665 672Q1668 664 1705 656Q1760 648 1820 649Q1930 652 1957 668" fill="none" stroke="#1d2429" stroke-width="2"/>
      <g stroke="#161616" stroke-width="2">
        <ellipse cx="1698" cy="1031" rx="13" ry="22" fill="#4b4b4b"/><path d="M1700 1014q9 14 2 34q8-3 8-18q-1-14-10-16z" fill="#0c0c0c"/><path d="M1690 1044q5 5 10 3" stroke="#999" stroke-width="3" fill="none"/>
        <ellipse cx="1909" cy="1037" rx="16" ry="22" fill="#595959"/><path d="M1903 1017q14 18 2 41q-12-6-12-20q1-15 10-21z" fill="#1d1d1d"/><path d="M1905 1055q6 3 11-3" stroke="#bbb" stroke-width="2" fill="none"/>
      </g>

      <g clip-path="url(#domeClip)">
        <use href="#domeShape" fill="url(#domeBase)"/>
        <g fill="none" stroke-linecap="round">
          <ellipse cx="1806" cy="1180" rx="100" ry="40" fill="#b4b4b4" filter="url(#b24)"/>
          <path d="M1450 1440C1440 1330 1480 1240 1560 1180" stroke="#707070" stroke-width="50" filter="url(#b24)"/>
          <path d="M1700 1135C1610 1155 1560 1220 1530 1300" stroke="#606060" stroke-width="46" filter="url(#b14)"/>
          <path d="M1545 1280C1522 1320 1512 1360 1504 1405" stroke="#222" stroke-width="36" filter="url(#b14)"/>
          <path d="M1530 1412C1620 1392 1690 1400 1760 1425" stroke="#464646" stroke-width="56" filter="url(#b14)"/>
          <path d="M1640 1260C1640 1220 1660 1200 1700 1190" stroke="#9e9e9e" stroke-width="60" filter="url(#b24)"/>
          <ellipse cx="1960" cy="1350" rx="110" ry="50" fill="#777" filter="url(#b24)"/>
          <path d="M1900 1275C1960 1240 2030 1240 2072 1285C2108 1330 2120 1370 2122 1410" stroke="#404040" stroke-width="58" filter="url(#b24)"/>
          <path d="M1980 1262C2020 1250 2045 1260 2070 1292C2098 1330 2112 1370 2118 1400" stroke="#484848" stroke-width="30" filter="url(#b14)"/>
          <path d="M1460 1240C1530 1155 1630 1108 1720 1098" stroke="#e4e4e4" stroke-width="20" filter="url(#b8)"/>
          <path d="M1700 1100C1800 1090 1880 1090 1950 1096" stroke="#b8b8b8" stroke-width="20" filter="url(#b8)"/>
          <path d="M2020 1165C2080 1185 2125 1230 2148 1285" stroke="#eee" stroke-width="28" filter="url(#b14)"/>
          <path d="M2160 1210C2205 1270 2222 1340 2226 1430" stroke="#a4a4a4" stroke-width="24" filter="url(#b8)"/>
          <path d="M1408 1430C1410 1340 1440 1265 1480 1225" stroke="#9b9b9b" stroke-width="14" filter="url(#b8)"/>
          <path d="M1622 1275L1596 1350" stroke="#d8d8d8" stroke-width="50" filter="url(#b14)"/>
          <ellipse cx="1725" cy="1335" rx="60" ry="40" fill="#d4d4d4" filter="url(#b14)"/>
          <ellipse cx="1797" cy="1345" rx="58" ry="56" fill="#fff" filter="url(#b24)"/>
          <ellipse cx="1799" cy="1348" rx="50" ry="50" fill="#fff" filter="url(#b14)"/>
        </g>
      </g>
      <path d="M1668 1087Q1818 1075 1961 1085" fill="none" stroke="#161616" stroke-width="2"/>
      <path d="M1397 1435Q1500 1447 1818 1449Q2050 1450 2236 1428L2238 1573Q2232 1582 2180 1592Q2050 1609 1806 1610Q1560 1609 1460 1593Q1405 1584 1398 1576z" fill="url(#band)"/>
      <path d="M1397 1435Q1500 1449 1818 1449Q2080 1448 2237 1428M2238 1573Q2232 1582 2180 1592Q2050 1609 1806 1610Q1560 1609 1460 1593Q1405 1584 1398 1576" fill="none" stroke="#1a1a1a" stroke-width="2"/>
      <path d="M1397 1513v65M2238 1428v50" stroke="#1a1a1a" stroke-width="1"/>

      <path d="M1819 1488V1610" stroke="#43438c" stroke-width="2" stroke-dasharray="30 6"/>
      <path d="M1819 1610V1672" stroke="#2b2b55" stroke-width="2"/>
      <g fill="#eba27c" stroke="#f2ac86" stroke-opacity=".3">
        <path d="M1833 1515L1950 1522V1703L1833 1690z" fill-opacity=".25"/>
        <path d="M1833 1515L1970 1503V1675L1833 1690z" fill-opacity=".25"/>
        <path d="M1833 1676L1968 1664V1675L1833 1690z" fill-opacity=".4"/>
        <path d="M1916 1612H1950V1664L1916 1668z" fill-opacity=".35"/>
        <path d="M1834 1715L1947 1702L2102 1715L1970 1731z" fill-opacity=".45"/>
      </g>
      <path d="M1819 1672V1698" stroke="#1b22c9" stroke-width="4"/>
      <path d="M1832 1714L1990 1697" stroke="#19c81e" stroke-width="5"/>
      <path d="M1832 1717L1967 1733" stroke="#d0161c" stroke-width="5"/>
      <circle cx="1819" cy="1716" r="9" fill="#f0f0f0" stroke="#777" stroke-width="2"/>

      <!-- view cube -->
      <path d="M3378 546L3433 553L3508 545L3508 552L3433 562L3378 552z" fill="#222b38" opacity=".6"/>
      <path d="M3375 448L3431 437V547L3375 542z" fill="#898b99"/>
      <path d="M3431 437L3507 446L3508 541L3433 547z" fill="#84868f"/>
      <path d="M3421 460L3446 462V526L3421 528z" fill="#77858f"/>
      <path d="M3374 430V541" stroke="#27278f" stroke-width="3"/>
      <path d="M3376 542L3433 548" stroke="#7d2f4c" stroke-width="3"/>
      <g font-family="Open Sans, sans-serif" font-weight="600" fill="#56616b">
        <text x="3380" y="498" font-size="14">FRONT</text><text x="3447" y="499" font-size="17">RIGHT</text>
        <text x="3366" y="430" font-size="26" fill="#2424a4">Z</text><text x="3447" y="559" font-size="20" fill="#b3262b">X</text>
      </g>
    </svg>

    <div class="overlay d-flex flex-column justify-content-between flex-fill">
      <div>
        <div class="pane pane-b d-flex align-items-center justify-content-between">
          <div class="d-flex align-items-center g20"><svg width="20" height="12"><use href="#rew"/></svg><span>BROWSER</span></div>
          <button aria-label="Collapse browser"><svg width="18" height="18"><use href="#minusc"/></svg></button>
        </div>
        <div class="tree d-flex flex-column" id="tree">
          <div class="trow root d-flex align-items-center"><svg width="22" height="20"><use href="#ropen"/></svg>
            <div class="tcell d-flex align-items-center"><svg class="i32 ico"><use href="#eye"/></svg>
              <div class="root-name d-flex align-items-center justify-content-between"><svg width="30" height="28"><use href="#solid"/></svg><span>gas nozzle v4</span></div>
              <svg width="26" height="26"><use href="#radio"/></svg></div></div>
        </div>
      </div>
      <div class="d-flex align-items-end justify-content-between">
        <div class="pane d-flex align-items-center justify-content-between"><span>COMMENTS</span><button aria-label="Expand comments"><svg width="18" height="18"><use href="#plusc"/></svg></button></div>
        <div class="navbar-3d d-flex align-items-center">
          <button class="d-flex align-items-center" aria-label="Orbit"><svg class="i32"><use href="#orbit"/></svg><span class="tri tri-s"></span></button>
          <button class="solo" aria-label="Look at"><svg class="i32"><use href="#lookat"/></svg></button>
          <button class="solo" aria-label="Pan"><svg class="i32"><use href="#hand"/></svg></button>
          <button class="solo" aria-label="Zoom"><svg class="i32"><use href="#zoomg"/></svg></button>
          <button class="d-flex align-items-center" aria-label="Fit"><svg class="i32"><use href="#zoomw"/></svg><span class="tri tri-s"></span></button>
          <button class="d-flex align-items-center" aria-label="Display settings"><svg class="i32"><use href="#screen"/></svg><span class="tri tri-s"></span></button>
          <button class="d-flex align-items-center" aria-label="Grid and snaps"><svg class="i32"><use href="#mesh"/></svg><span class="tri tri-s"></span></button>
          <button class="d-flex align-items-center" aria-label="Viewports"><svg class="i32"><use href="#quad"/></svg><span class="tri tri-s"></span></button>
        </div>
        <div class="pane invisible"></div>
      </div>
      <button class="corner-badge position-absolute" aria-label="Assistant"><svg width="34" height="34" viewBox="0 0 34 34"><path d="M17 1a16 16 0 000 32h16V17A16 16 0 0017 1z" fill="#000" stroke="#777"/><path d="M8 21L18 10M13 23L24 11M19 24l6-6" stroke="#fff" stroke-width="2"/></svg></button>
    </div>
  </section>

  <footer class="timeline d-flex align-items-center">
    <div class="play d-flex align-items-center justify-content-between">
      <button aria-label="Go to start"><svg width="26" height="28"><use href="#pfirst"/></svg></button>
      <button aria-label="Step back"><svg width="26" height="28"><use href="#pprev"/></svg></button>
      <button aria-label="Play"><svg width="26" height="32"><use href="#pplay"/></svg></button>
      <button aria-label="Step forward"><svg width="26" height="28"><use href="#pnext"/></svg></button>
      <button aria-label="Go to end"><svg width="26" height="28"><use href="#plast"/></svg></button>
    </div>
    <ul class="steps d-flex list-unstyled m-0 align-self-start" id="steps"></ul>
    <button class="ms-auto" aria-label="Timeline settings"><svg class="i32" color="#7d7d7d"><use href="#gear"/></svg></button>
  </footer>
</main>

<script src="https://cdn.jsdelivr.net/npm/bootstrap@5.3.0/dist/js/bootstrap.bundle.min.js"></script>
<script>
  const groups = [
    ['CREATE', ['rSketch', 'rExt', 'rRev', 'rHole', 'rPat', 'rForm']],
    ['AUTOMATE', ['rAuto'], 'w-md'],
    ['MODIFY', ['rPress', 'rFillet', 'rShell', 'rComb', 'rSplit', 'rMove']],
    ['ASSEMBLE', ['rNewC', 'rJoint', 'rBom']],
    ['CONFIGURE', ['rConf', 'rTab'], 'w-lg'],
    ['CONSTRUCT', ['rPlane'], 'w-lg'],
    ['INSPECT', ['rMeas']],
    ['INSERT', ['rLink', 'rBolt', 'rImg']],
    ['SELECT', ['rSel']]
  ];
  document.getElementById('groups').innerHTML = groups.map(([name, icons, width = '']) =>
    `<div class="rgroup ${width} d-flex flex-column justify-content-between"><div class="ricons d-flex justify-content-center">${
      icons.map(i => `<button aria-label="${name} ${i.slice(1)}"><svg class="${i === 'rSel' ? 'pick' : 'i64'}"><use href="#${i}"/></svg></button>`).join('')
    }</div><button class="rlabel d-flex align-items-center justify-content-center"><span>${name}</span><span class="tri tri-s"></span></button></div>`).join('');

  const rows = [['Document Settings', ['gear']], ['Named Views', ['folder']],
    ['Origin'], ['Analysis'], ['Bodies'], ['Sketches'], ['Construction']];
  document.getElementById('tree').insertAdjacentHTML('beforeend', rows.map(([name, icons = ['eye', 'folder']]) =>
    `<div class="trow d-flex align-items-center"><svg width="16" height="20"><use href="#rshut"/></svg><div class="tcell d-flex align-items-center gap18">${
      icons.map(i => `<svg class="${i === 'gear' ? '' : 'i32'} ico" width="26" height="28"><use href="#${i}"/></svg>`).join('')
    }<span class="ps10">${name}</span></div></div>`).join(''));

  const history = 'SESESSEEEESEEESESEEFEPSEPSE';
  document.getElementById('steps').innerHTML = [...history].map(t =>
    `<li><button class="d-block mx-auto" aria-label="Feature"><svg class="i32"><use href="#t${t}"/></svg></button><div class="tickmark"></div></li>`).join('')
    + '<li class="marker"><svg width="24" height="66"><use href="#pin"/></svg></li>';

  // Perspective ground grid: both line families run to their vanishing points on the horizon.
  const H = 1280, XL = -1532, XR = 5135, lo = 112, hi = 3568;
  const left = inv => `M${lo} ${(H + (lo - XL) / inv).toFixed(1)}L${hi} ${(H + (hi - XL) / inv).toFixed(1)}`;
  const right = inv => `M${lo} ${(H + (XR - lo) / inv).toFixed(1)}L${hi} ${(H + (XR - hi) / inv).toFixed(1)}`;
  let major = '', minor = '';
  for (let k = -24 * 5; k <= 64 * 5; k++) {
    const a = 7.686 + k * 0.319 / 5, b = 7.6 + k * 0.33 / 5;
    const seg = (a > 0.5 ? left(a) : '') + (b > 0.5 ? right(b) : '');
    if (k % 5 === 0) major += seg; else minor += seg;
  }
  document.getElementById('major').setAttribute('d', major);
  document.getElementById('minor').setAttribute('d', minor);
</script>
</body>
</html>
